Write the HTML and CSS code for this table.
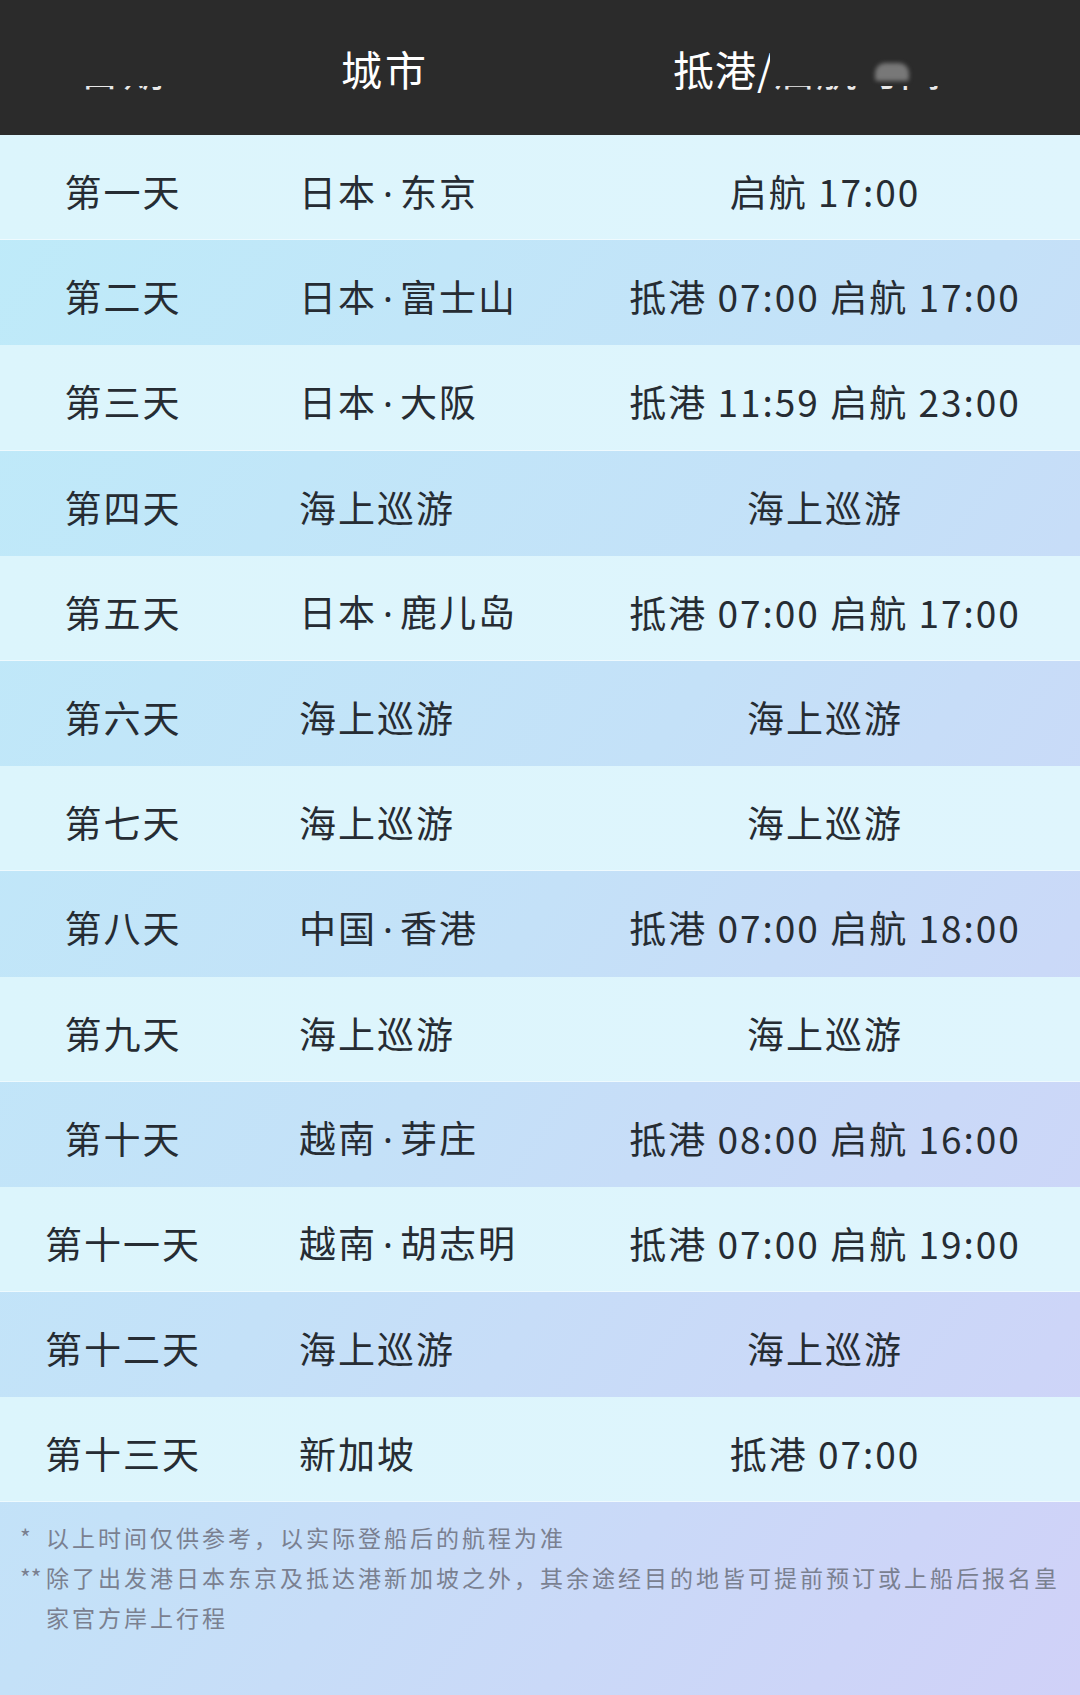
FILE: index.html
```html
<!DOCTYPE html>
<html lang="zh-CN">
<head>
<meta charset="utf-8">
<title>航程</title>
<link rel="stylesheet" href="styles.css">
</head>
<body>
<div class="page">
  <div class="head">
    <div class="hcell h1"><span class="cover">日期</span></div>
    <div class="hcell h2">城市</div>
    <div class="hcell h3">抵港/<span class="cover">启航时间</span><span class="blob"></span></div>
  </div>
  <div class="body">
    <div class="row light"><div class="c1">第一天</div><div class="c2">日本<span class="dot">·</span>东京</div><div class="c3">启航 17:00</div></div>
    <div class="row"><div class="c1">第二天</div><div class="c2">日本<span class="dot">·</span>富士山</div><div class="c3">抵港 07:00 启航 17:00</div></div>
    <div class="row light"><div class="c1">第三天</div><div class="c2">日本<span class="dot">·</span>大阪</div><div class="c3">抵港 11:59 启航 23:00</div></div>
    <div class="row"><div class="c1">第四天</div><div class="c2">海上巡游</div><div class="c3">海上巡游</div></div>
    <div class="row light"><div class="c1">第五天</div><div class="c2">日本<span class="dot">·</span>鹿儿岛</div><div class="c3">抵港 07:00 启航 17:00</div></div>
    <div class="row"><div class="c1">第六天</div><div class="c2">海上巡游</div><div class="c3">海上巡游</div></div>
    <div class="row light"><div class="c1">第七天</div><div class="c2">海上巡游</div><div class="c3">海上巡游</div></div>
    <div class="row"><div class="c1">第八天</div><div class="c2">中国<span class="dot">·</span>香港</div><div class="c3">抵港 07:00 启航 18:00</div></div>
    <div class="row light"><div class="c1">第九天</div><div class="c2">海上巡游</div><div class="c3">海上巡游</div></div>
    <div class="row"><div class="c1">第十天</div><div class="c2">越南<span class="dot">·</span>芽庄</div><div class="c3">抵港 08:00 启航 16:00</div></div>
    <div class="row light"><div class="c1">第十一天</div><div class="c2">越南<span class="dot">·</span>胡志明</div><div class="c3">抵港 07:00 启航 19:00</div></div>
    <div class="row"><div class="c1">第十二天</div><div class="c2">海上巡游</div><div class="c3">海上巡游</div></div>
    <div class="row light"><div class="c1">第十三天</div><div class="c2">新加坡</div><div class="c3">抵港 07:00</div></div>
    <div class="notes">
      <div class="note"><span class="mark">*</span><span class="ntext">以上时间仅供参考，以实际登船后的航程为准</span></div>
      <div class="note"><span class="mark">**</span><span class="ntext">除了出发港日本东京及抵达港新加坡之外，其余途经目的地皆可提前预订或上船后报名皇家官方岸上行程</span></div>
    </div>
  </div>
</div>
</body>
</html>
```
FILE: styles.css
```css
html, body {
  margin: 0;
  padding: 0;
}
body {
  width: 1080px;
  height: 1695px;
  overflow: hidden;
  font-family: "Noto Sans CJK SC", "Noto Sans", sans-serif;
  background: #2b2b2b;
}
.page {
  width: 1080px;
  height: 1695px;
  display: flex;
  flex-direction: column;
}
.head {
  height: 135px;
  flex: none;
  background: #2b2b2b;
  display: grid;
  grid-template-columns: 246px 324px 510px;
  align-items: center;
  color: #ffffff;
  font-size: 41px;
  letter-spacing: 3px;
  line-height: 1;
}
.hcell {
  position: relative;
  padding-top: 2px;
}
.h1 { text-align: center; }
.h2 { padding-left: 95px; }
.h3 { padding-left: 103px; letter-spacing: 1px; }
.cover {
  position: relative;
  display: inline-block;
  line-height: 41px;
  height: 41px;
  color: #e8e8e8;
}
.cover::after {
  content: "";
  position: absolute;
  left: -4px;
  right: -4px;
  top: -6px;
  height: 43.5px;
  background: #2b2b2b;
}
.blob {
  position: absolute;
  left: 305px;
  top: 17px;
  width: 34px;
  height: 18px;
  border-radius: 10px 10px 3px 3px;
  background: #787878;
  filter: blur(2px);
}
.body {
  flex: 1;
  display: flex;
  flex-direction: column;
  background: linear-gradient(to bottom right, #beebf9 0%, #c4e1f8 50%, #d0d1f8 100%);
}
.row {
  height: 105.2px;
  flex: none;
  display: grid;
  grid-template-columns: 246px 324px 510px;
  align-items: center;
  color: #262c33;
  font-size: 37px;
  letter-spacing: 2px;
  line-height: 1;
}
.row.light {
  background: linear-gradient(90deg, #dcf5fc 0%, #dff5fd 100%);
  box-shadow: inset 0 -1px 0 rgba(255, 255, 255, 0.5);
}
.c1, .c2, .c3 {
  padding-top: 8px;
}
.c1 { text-align: center; }
.c2 { padding-left: 53px; }
.c3 { text-align: center; }
.dot {
  font-family: "Noto Sans", sans-serif;
  letter-spacing: 0;
  margin: 0 7px 0 6px;
}
.notes {
  flex: 1;
  padding: 15px 20px 0 20px;
  color: #7a8090;
  font-size: 23px;
  letter-spacing: 3px;
  line-height: 40px;
}
.note {
  display: flex;
}
.mark {
  width: 26px;
  flex: none;
  letter-spacing: 0;
}
.ntext {
  flex: 1;
}
```
